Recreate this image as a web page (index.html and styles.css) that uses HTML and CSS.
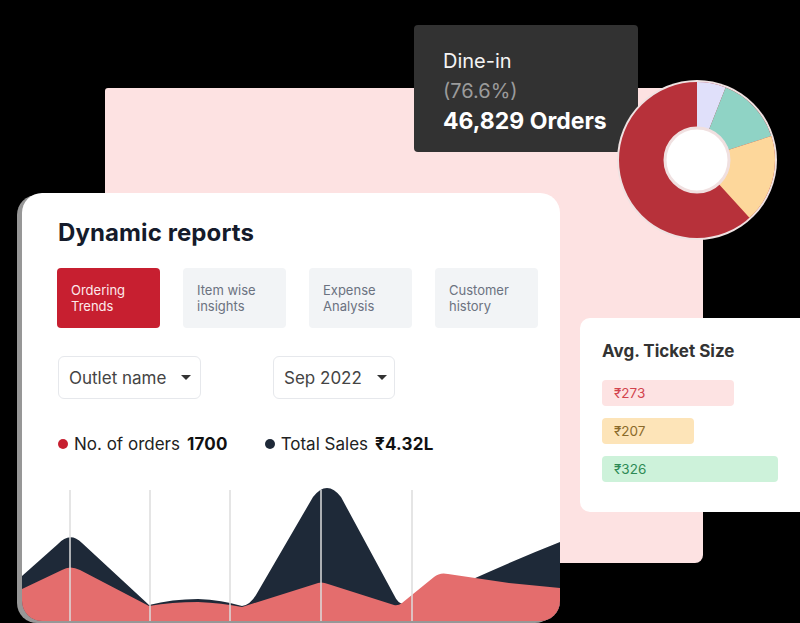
FILE: index.html
```html
<!DOCTYPE html>
<html lang="en">
<head>
<meta charset="utf-8">
<title>Dynamic reports</title>
<link rel="stylesheet" href="styles.css">
</head>
<body>
<div class="stage">
  <div class="pink-panel"></div>

  <section class="report-card">
    <div class="report-body">
      <h1 class="report-title">Dynamic reports</h1>
      <div class="tabs">
        <div class="tab tab-active">Ordering<br>Trends</div>
        <div class="tab">Item wise<br>insights</div>
        <div class="tab">Expense<br>Analysis</div>
        <div class="tab">Customer<br>history</div>
      </div>
      <div class="filters">
        <div class="select select-outlet"><span>Outlet name</span><span class="caret"></span></div>
        <div class="select select-date"><span>Sep 2022</span><span class="caret"></span></div>
      </div>
      <div class="legend">
        <div class="legend-item"><span class="dot dot-red"></span><span>No. of orders</span><b>1700</b></div>
        <div class="legend-item"><span class="dot dot-navy"></span><span>Total Sales</span><b>₹4.32L</b></div>
      </div>
    </div>
    <svg class="chart" width="538" height="134" viewBox="0 0 538 134">
      <path fill="#1e2938" d="M0,89 L36,57 Q48,44 60,56 L127,118 Q150,112 176,112 Q200,113 220,119 Q228,118 234,108 L291,10 Q305,-8 319,10 L372,108 Q376,117 382,117 L420,117 L451,92 Q495,72 538,55 L538,134 L0,134 Z"/>
      <path fill="#e46d6d" d="M0,102 L40,83 Q48,78 58,83 L127,119 Q150,115 176,115 Q200,116 220,120 L293,97 Q299,94 306,97 L372,118 Q376,119 380,116 L412,90 Q418,85 426,87 L487,96 L538,101 L538,134 L0,134 Z"/>
      <g stroke="#dcdcdc" stroke-width="1.5">
        <line x1="48" y1="3" x2="48" y2="134"/>
        <line x1="128" y1="3" x2="128" y2="134"/>
        <line x1="208" y1="3" x2="208" y2="134"/>
        <line x1="299" y1="3" x2="299" y2="134"/>
        <line x1="390" y1="3" x2="390" y2="134"/>
      </g>
    </svg>
  </section>

  <div class="tooltip">
    <div class="tt-label">Dine-in</div>
    <div class="tt-pct">(76.6%)</div>
    <div class="tt-value">46,829 Orders</div>
  </div>

  <svg class="donut" width="166" height="166" viewBox="0 0 166 166">
    <circle cx="83" cy="83" r="80" fill="#efe2e2"/>
    <g transform="rotate(-90 83 83)" fill="none" stroke-width="47">
      <circle cx="83" cy="83" r="54.5" stroke="#b7313a"/>
      <circle cx="83" cy="83" r="54.5" stroke="#e0e0fa" stroke-dasharray="20.45 400"/>
      <circle cx="83" cy="83" r="54.5" stroke="#8fd3c5" stroke-dasharray="48.03 400" stroke-dashoffset="-20.45"/>
      <circle cx="83" cy="83" r="54.5" stroke="#fdd79b" stroke-dasharray="62.3 400" stroke-dashoffset="-68.48"/>
    </g>
    <circle cx="83" cy="83" r="32" fill="#fff" stroke="#f0e0e0" stroke-width="3"/>
  </svg>

  <section class="ticket-card">
    <h2 class="ticket-title">Avg. Ticket Size</h2>
    <div class="bars">
      <div class="bar bar-red" style="width:132px">₹273</div>
      <div class="bar bar-amber" style="width:92px">₹207</div>
      <div class="bar bar-green" style="width:176px">₹326</div>
    </div>
  </section>
</div>
</body>
</html>
```

FILE: styles.css
```css
* { box-sizing: border-box; }
html, body {
  margin: 0;
  padding: 0;
  background: #000;
  overflow: hidden;
}
body {
  font-family: Inter, "Noto Sans", "Liberation Sans", sans-serif;
  width: 800px;
  height: 623px;
}
.stage {
  position: relative;
  width: 800px;
  height: 623px;
  overflow: hidden;
}

/* background pink panel */
.pink-panel {
  position: absolute;
  left: 105px;
  top: 88px;
  width: 598px;
  height: 475px;
  background: #fde2e2;
  border-radius: 3px 3px 8px 3px;
}

/* main report card */
.report-card {
  position: absolute;
  left: 22px;
  top: 193px;
  width: 538px;
  height: 428px;
  background: #fff;
  border-radius: 20px;
  box-shadow: -5px 2px 0 #979797;
  display: flex;
  flex-direction: column;
  overflow: hidden;
}
.report-body {
  padding: 25px 0 0 35px;
  display: flex;
  flex-direction: column;
}
.report-title {
  margin: 0 0 0 1px;
  font-size: 24px;
  line-height: 30px;
  font-weight: 700;
  color: #151b2b;
  letter-spacing: 0.1px;
}
.tabs {
  margin-top: 20px;
  display: flex;
  gap: 23px;
}
.tab {
  width: 103px;
  height: 60px;
  border-radius: 4px;
  background: #f2f4f6;
  color: #6b7280;
  font-size: 13px;
  line-height: 16px;
  padding: 0 14px;
  display: flex;
  align-items: center;
}
.tab-active {
  background: #c71f30;
  color: #fde9eb;
}
.filters {
  margin-top: 28px;
  margin-left: 1px;
  display: flex;
  gap: 72px;
}
.select {
  height: 43px;
  border: 1px solid #e6e8ec;
  border-radius: 6px;
  padding: 0 0 0 10px;
  display: flex;
  align-items: center;
  font-size: 17px;
  color: #444;
}
.select-outlet { width: 143px; }
.select-date { width: 122px; }
.caret {
  margin-left: 15px;
  width: 0;
  height: 0;
  border-left: 5px solid transparent;
  border-right: 5px solid transparent;
  border-top: 5px solid #333;
}
.legend {
  margin-top: 33px;
  margin-left: 1px;
  display: flex;
  gap: 37px;
  font-size: 17px;
  line-height: 24px;
  color: #222;
}
.legend-item {
  display: flex;
  align-items: center;
  gap: 6px;
}
.legend-item b {
  font-weight: 700;
  color: #111;
  margin-left: 1px;
  letter-spacing: 0.2px;
}
.dot {
  width: 10px;
  height: 10px;
  border-radius: 50%;
}
.dot-red { background: #c71f30; }
.dot-navy { background: #1e2938; }
.chart {
  display: block;
  margin-top: auto;
}

/* tooltip */
.tooltip {
  position: absolute;
  left: 414px;
  top: 25px;
  width: 224px;
  height: 127px;
  background: #323232;
  border-radius: 4px;
  padding: 21px 0 0 29px;
  font-size: 20px;
  line-height: 30px;
  color: #f4f4f4;
}
.tt-pct { color: #9b9b9b; }
.tt-value {
  font-size: 23px;
  font-weight: 700;
  color: #fff;
}

/* donut */
.donut {
  position: absolute;
  left: 614px;
  top: 77px;
}

/* ticket card */
.ticket-card {
  position: absolute;
  left: 580px;
  top: 318px;
  width: 240px;
  height: 194px;
  background: #fff;
  border-radius: 10px;
  padding: 22px 0 0 22px;
}
.ticket-title {
  margin: 0;
  font-size: 17px;
  line-height: 22px;
  font-weight: 700;
  color: #333;
}
.bars {
  margin-top: 18px;
  display: flex;
  flex-direction: column;
  gap: 12px;
}
.bar {
  height: 26px;
  border-radius: 4px;
  padding-left: 12px;
  font-size: 13.5px;
  line-height: 26px;
}
.bar-red { background: #fde3e3; color: #d2434e; }
.bar-amber { background: #fde4b8; color: #8a6a2a; }
.bar-green { background: #cdf2da; color: #2e8a55; }
```
